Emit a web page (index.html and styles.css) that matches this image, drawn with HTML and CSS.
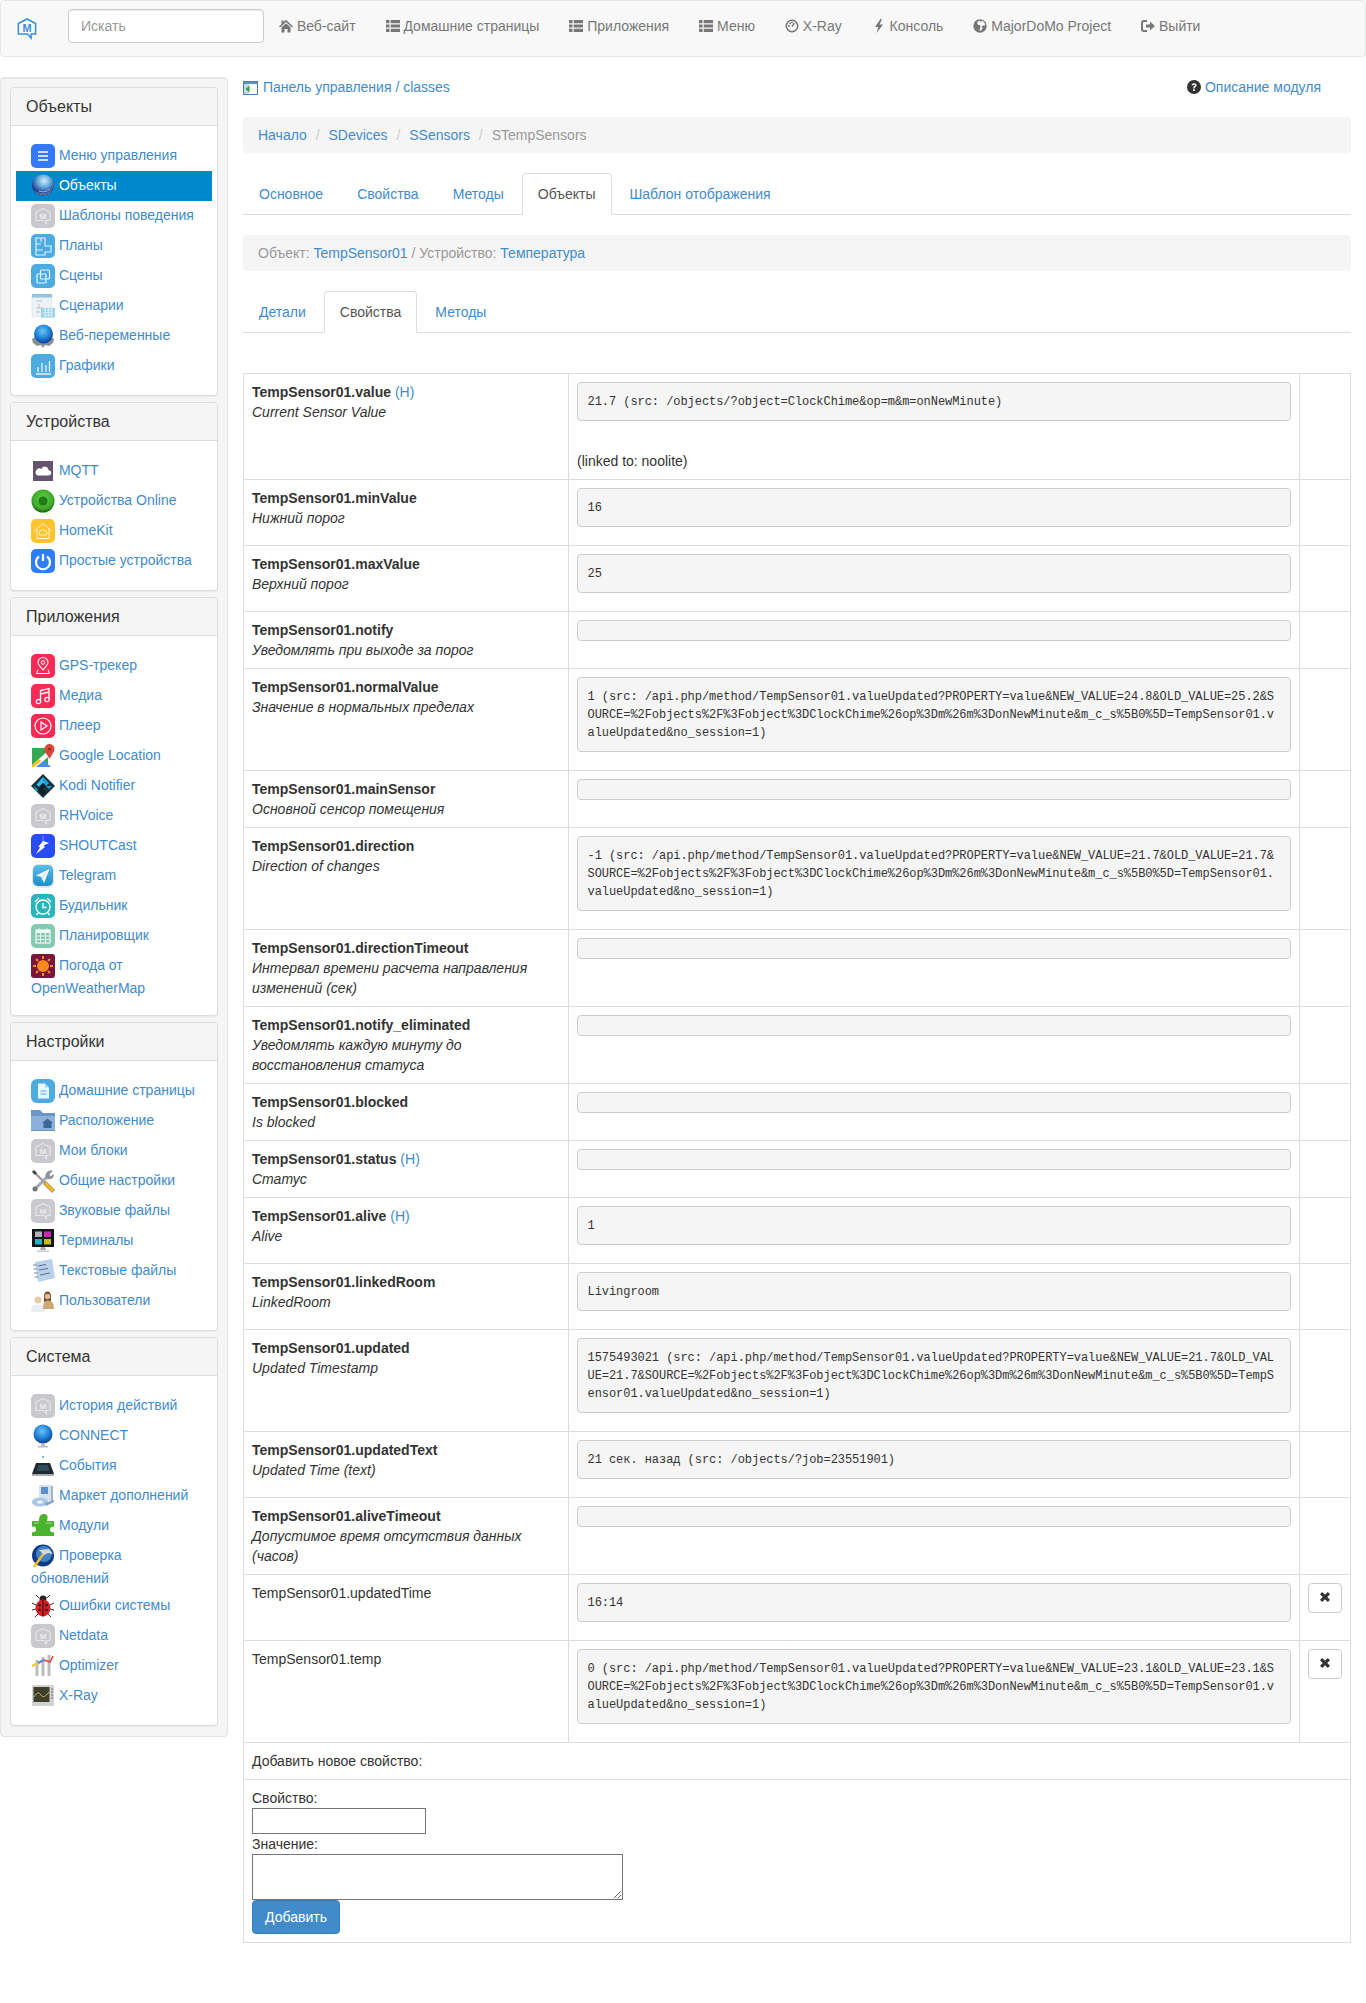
FILE: index.html
```html
<!DOCTYPE html>
<html lang="ru">
<head>
    <meta charset="UTF-8">
    <title>MajorDoMo - classes</title>
    <link rel="stylesheet" href="styles.css">
</head>
<body>

<svg class="sprite" width="0" height="0">
    <defs>
        <radialGradient id="g-ball" cx="55%" cy="30%" r="70%">
            <stop offset="0" stop-color="#cfeaf4"/><stop offset=".4" stop-color="#6aafdb"/><stop offset=".8" stop-color="#27479f"/><stop offset="1" stop-color="#14205f"/>
        </radialGradient>
        <radialGradient id="grad-globe" cx="45%" cy="35%" r="65%">
            <stop offset="0" stop-color="#6cc4f5"/><stop offset=".6" stop-color="#1e7fd6"/><stop offset="1" stop-color="#0d3f98"/>
        </radialGradient>
        <radialGradient id="g-green" cx="50%" cy="40%" r="60%">
            <stop offset="0" stop-color="#5fd03e"/><stop offset=".75" stop-color="#3fa82a"/><stop offset="1" stop-color="#145a12"/>
        </radialGradient>
        <linearGradient id="g-tg" x1="0" y1="0" x2="0" y2="1">
            <stop offset="0" stop-color="#5bbde8"/><stop offset="1" stop-color="#1f8ec9"/>
        </linearGradient>

        <symbol id="i-logo" viewBox="0 0 22 24">
            <path d="M11 1.5 20.5 6.5V18H15.5V22.5L11.5 18H1.5V6.5Z" fill="none" stroke="#3a8fdc" stroke-width="1.7"/>
            <text x="11" y="15.5" text-anchor="middle" class="logo-letter">M</text>
        </symbol>
        <symbol id="i-m" viewBox="0 0 24 24">
            <rect width="24" height="24" rx="5" fill="#c8c8cd"/>
            <path d="M12 4.5 19 8V16.5H15.5V19.5L13 16.5H5V8Z" fill="none" stroke="#e6e6e9" stroke-width="1.2"/>
            <text x="12" y="14.5" text-anchor="middle" class="tile-letter">M</text>
        </symbol>
        <symbol id="i-menu" viewBox="0 0 24 24">
            <rect width="24" height="24" rx="5" fill="#3479fb"/>
            <path d="M7 8H17M7 12H17M7 16H17" stroke="#fff" stroke-width="1.6"/>
        </symbol>
        <symbol id="i-obj" viewBox="0 0 24 24">
            <ellipse cx="12" cy="11" rx="11" ry="10.5" fill="url(#g-ball)"/>
            <path d="M3 15C6 21 18 21 21.5 14 20 23.5 5 23.5 3 15Z" fill="#6a7596"/>
            <path d="M8 17C12 18.5 16 18 19 15" stroke="#aab4d0" fill="none"/>
        </symbol>
        <symbol id="i-plan" viewBox="0 0 24 24">
            <rect width="24" height="24" rx="5" fill="#4cabe0"/>
            <path d="M5 4H14V12H20V18H14V21H5ZM5 10H10M10 4V8M5 16H12" fill="none" stroke="#e6f4fb" stroke-width="1.1"/>
        </symbol>
        <symbol id="i-scene" viewBox="0 0 24 24">
            <rect width="24" height="24" rx="5" fill="#4cabe0"/>
            <rect x="6" y="10" width="9" height="9" rx="1" fill="none" stroke="#e6f4fb" stroke-width="1.2"/>
            <rect x="9.5" y="6" width="9" height="9" rx="1" fill="none" stroke="#e6f4fb" stroke-width="1.2"/>
        </symbol>
        <symbol id="i-script" viewBox="0 0 24 24">
            <rect x="1" y="0" width="20" height="23" fill="#eef2f4" stroke="#dbe2e6" stroke-width=".6"/>
            <rect x="1" y="0" width="20" height="3.5" fill="#8fc6dd"/>
            <path d="M5 7H11M8 10V14M5 14H12M5 18H9" stroke="#b9c4ca"/>
            <rect x="10" y="14" width="14" height="9.5" fill="#9ad4ec"/>
            <path d="M12 16H22M12 18.5H22M12 21H22M14.5 14V23M17.5 14V23M20.5 14V23" stroke="#dff2fa" stroke-width=".8"/>
        </symbol>
        <symbol id="i-webvar" viewBox="0 0 24 24">
            <path d="M1 15 4 13 20 13 23 15 22 19 18 22 14 21 12 24 10 21 6 22 2 19Z" fill="#8b8f94"/>
            <circle cx="12.5" cy="10" r="9.5" fill="url(#grad-globe)"/>
        </symbol>
        <symbol id="i-chart" viewBox="0 0 24 24">
            <rect width="24" height="24" rx="5" fill="#4cabe0"/>
            <path d="M7 18V13M11 18V9M15 18V11M18.5 18V7M5 20H20" stroke="#e6f4fb" stroke-width="1.3"/>
        </symbol>
        <symbol id="i-mqtt" viewBox="0 0 24 24">
            <rect x="2" y="2" width="20" height="20" fill="#655470"/>
            <path d="M6.5 16.5H17.5A2.6 2.6 0 0 0 17.5 11.2 3.6 3.6 0 0 0 10.5 10 3.4 3.4 0 0 0 6.5 16.5Z" fill="#fff"/>
        </symbol>
        <symbol id="i-online" viewBox="0 0 24 24">
            <circle cx="12" cy="12" r="11.5" fill="url(#g-green)"/>
            <circle cx="12" cy="12" r="4.5" fill="#1f7a1a"/>
        </symbol>
        <symbol id="i-homekit" viewBox="0 0 24 24">
            <rect width="24" height="24" rx="5" fill="#fec32d"/>
            <path d="M3.5 12 12 4.5 20.5 12M6 10V19.5H18V10M8.5 12.5 12 10.5 15.5 12.5V16H8.5Z" fill="none" stroke="#fff3c9" stroke-width="1"/>
        </symbol>
        <symbol id="i-power" viewBox="0 0 24 24">
            <rect width="24" height="24" rx="5" fill="#2f7dfb"/>
            <path d="M8 7.5A7 7 0 1 0 16 7.5" fill="none" stroke="#fff" stroke-width="2.2"/>
            <path d="M12 5V12" stroke="#fff" stroke-width="2.2"/>
        </symbol>
        <symbol id="i-gps" viewBox="0 0 24 24">
            <rect width="24" height="24" rx="5" fill="#fb2a55"/>
            <path d="M12 16C9 12.5 7 10.5 7 8.5A5 5 0 0 1 17 8.5C17 10.5 15 12.5 12 16Z" fill="none" stroke="#fff" stroke-width="1.1"/>
            <circle cx="12" cy="8.5" r="1.8" fill="none" stroke="#fff"/>
            <path d="M7 15.5 5.5 19.5H18.5L17 15.5" fill="none" stroke="#fff"/>
        </symbol>
        <symbol id="i-media" viewBox="0 0 24 24">
            <rect width="24" height="24" rx="5" fill="#fb2a55"/>
            <path d="M9.5 17V6.5L18 4.5V15M9.5 10 18 8" fill="none" stroke="#fff" stroke-width="1.3"/>
            <circle cx="7.5" cy="17.5" r="2.2" fill="none" stroke="#fff" stroke-width="1.2"/>
            <circle cx="16" cy="15.5" r="2.2" fill="none" stroke="#fff" stroke-width="1.2"/>
        </symbol>
        <symbol id="i-player" viewBox="0 0 24 24">
            <rect width="24" height="24" rx="5" fill="#fb2a55"/>
            <circle cx="12" cy="12" r="8" fill="none" stroke="#fff" stroke-width="1.2"/>
            <path d="M10 8 16 12 10 16Z" fill="none" stroke="#fff" stroke-width="1.2"/>
        </symbol>
        <symbol id="i-gmap" viewBox="0 0 24 24">
            <path d="M1 4H17V23H1Z" fill="#35a853"/>
            <path d="M1 23 10 14 20 23Z" fill="#4a8bf0"/>
            <path d="M1 21 18 6 22 9 5 23H1Z" fill="#fff"/>
            <path d="M1 21 8 15 10 17 3 23H1Z" fill="#f4c20d"/>
            <path d="M18.5 0A5 5 0 0 1 23.5 5C23.5 8 20.5 11 18.5 15 16.5 11 13.5 8 13.5 5A5 5 0 0 1 18.5 0Z" fill="#d8483a"/>
            <circle cx="18.5" cy="5" r="1.6" fill="#8f2c22"/>
        </symbol>
        <symbol id="i-kodi" viewBox="0 0 24 24">
            <path d="M12 0 24 12 12 24 0 12Z" fill="#16323f"/>
            <path d="M12 3 18 9 15 12 12 9Z" fill="#1aa3d6"/>
            <path d="M12 3V9L8 13 5.5 10.5Z" fill="#33bde8"/>
            <path d="M8 13 12 9 15 12 12 15 15 18 12 21 8 17Z" fill="#0f1d24"/>
            <path d="M15 12 21 12 18 15 15 12ZM3 12 7 16 5.5 17.5 2.5 12.5Z" fill="#1aa3d6"/>
        </symbol>
        <symbol id="i-shout" viewBox="0 0 24 24">
            <rect width="24" height="24" rx="5" fill="#2a4cf7"/>
            <path d="M18 9 12.5 11.5 14 13 5 20 9 13.5 7.5 12.5 12 7Z" fill="#fff"/>
            <path d="M12 7V2" stroke="#7f93fb"/>
        </symbol>
        <symbol id="i-telegram" viewBox="0 0 24 24">
            <rect x="1" y="0" width="22" height="24" rx="6" fill="#dfe9ee"/>
            <rect x="2" y="1" width="20" height="21" rx="5" fill="url(#g-tg)"/>
            <path d="M18.5 5 5 11.5 10.5 13 13 19Z" fill="#fff"/>
            <path d="M10.5 13 18.5 5 12 14 11 17Z" fill="#cfe6f3"/>
        </symbol>
        <symbol id="i-alarm" viewBox="0 0 24 24">
            <rect width="24" height="24" rx="5" fill="#2ab5bd"/>
            <circle cx="12" cy="13" r="7" fill="none" stroke="#fff" stroke-width="1.3"/>
            <path d="M12 9V13.5H15.5M4 8 8 4M20 8 16 4M7 19 5.5 21M17 19 18.5 21" fill="none" stroke="#fff" stroke-width="1.3"/>
        </symbol>
        <symbol id="i-sched" viewBox="0 0 24 24">
            <rect width="24" height="24" rx="5" fill="#85c9b4"/>
            <rect x="5" y="6" width="14" height="13" fill="none" stroke="#eef8f4" stroke-width="1.2"/>
            <rect x="5" y="6" width="14" height="3" fill="#eef8f4"/>
            <path d="M8 4V7M16 4V7M5 12H19M5 15.5H19M9.5 9V19M14.5 9V19" stroke="#eef8f4" stroke-width=".9"/>
        </symbol>
        <symbol id="i-weather" viewBox="0 0 24 24">
            <rect width="24" height="24" rx="3" fill="#79143f"/>
            <circle cx="12" cy="12" r="6" fill="#f68a1f"/>
            <path d="M12 2V5M12 19V22M2 12H5M19 12H22M5 5 7 7M17 17 19 19M19 5 17 7M7 17 5 19" stroke="#f68a1f" stroke-width="2"/>
        </symbol>
        <symbol id="i-doc" viewBox="0 0 24 24">
            <rect width="24" height="24" rx="6" fill="#4cabe0"/>
            <path d="M7 4.5H14L18 8.5V19.5H7Z" fill="#eaf6fc"/>
            <path d="M14 4.5V8.5H18" fill="#a9d8f0"/>
            <path d="M9.5 12H15.5M9.5 15H15.5" stroke="#4cabe0" stroke-width="1.1"/>
        </symbol>
        <symbol id="i-folder" viewBox="0 0 24 24">
            <path d="M0 1H9L12 4H24V22H0Z" fill="#6d94c9"/>
            <path d="M0 7H24V21H0Z" fill="#8cb0dc"/>
            <path d="M11 14 16.5 9.5 22 14H20.5V19H12.5V14Z" fill="#3e6797"/>
        </symbol>
        <symbol id="i-tools" viewBox="0 0 24 24">
            <path d="M2 2 14 14" stroke="#8e9498" stroke-width="2"/>
            <path d="M1 3 3 1 6 4 4 6Z" fill="#444"/>
            <path d="M12.5 15 15 12.5 23.5 21 21 23.5Z" fill="#f5bb17" stroke="#555" stroke-width=".6"/>
            <path d="M4 20 16 8" stroke="#a4a9ad" stroke-width="3"/>
            <path d="M15 9C13 5 17 0 22 2L18.5 5 19.5 7.5 22.5 5C24 9 19 12 15 9Z" fill="#8e9498"/>
            <circle cx="4" cy="20" r="2.5" fill="#6f7478"/>
        </symbol>
        <symbol id="i-terminal" viewBox="0 0 24 24">
            <rect x="1" y="0" width="22" height="18" fill="#14181a"/>
            <rect x="4" y="2.5" width="7" height="5.5" fill="#aeb4b6"/>
            <rect x="13" y="2.5" width="7" height="5.5" fill="#c82ab0"/>
            <rect x="4" y="10" width="7" height="5.5" fill="#1fb6c4"/>
            <rect x="13" y="10" width="7" height="5.5" fill="#c9b81a"/>
            <path d="M10 18H14L15 21H9Z" fill="#a8abae"/>
            <path d="M6 21.5H18V23H6Z" fill="#c9cbcd"/>
        </symbol>
        <symbol id="i-notes" viewBox="0 0 24 24">
            <path d="M4 3 21 0 24 19 7 23Z" fill="#b9d2ec"/>
            <path d="M7 7 15 5.5M8 11 17 9.5M9 16 19 14" stroke="#55677c" stroke-width=".9"/>
            <path d="M2 6H6M2.5 10H6.5M3 14H7M3.5 18H7.5" stroke="#7a8794" stroke-width="1.1"/>
        </symbol>
        <symbol id="i-users" viewBox="0 0 24 24">
            <circle cx="7" cy="11" r="3.5" fill="#e8c9a8"/>
            <path d="M0 23C0 17 3 15.5 7 15.5S14 17 14 23Z" fill="#e9eef2"/>
            <path d="M13 7C13 1 20 1 20 7V13H13Z" fill="#6d4a2c"/>
            <circle cx="16.5" cy="7.5" r="2.8" fill="#e2bb90"/>
            <path d="M12 20C12 13 14 11.5 17 11.5S23 13 23 20Z" fill="#cda874"/>
        </symbol>
        <symbol id="i-connect" viewBox="0 0 24 24">
            <circle cx="12" cy="10" r="9.5" fill="url(#grad-globe)"/>
            <path d="M10 20H14V22H10ZM7 22H17V23.5H7Z" fill="#b8bcc0"/>
        </symbol>
        <symbol id="i-events" viewBox="0 0 24 24">
            <path d="M12 2V4" stroke="#5b9bd5" stroke-width="1.5"/>
            <path d="M5 9H19L23 20H1Z" fill="#1e2a30"/>
            <path d="M7.5 11H16.5L18.5 17H5.5Z" fill="#2f4a58"/>
            <path d="M1 20H23V22H1Z" fill="#a8adb0"/>
        </symbol>
        <symbol id="i-market" viewBox="0 0 24 24">
            <path d="M8 1H20V17H8Z" fill="#d7e2ee"/>
            <path d="M10 3H17V10H10Z" fill="#5d8fc6"/>
            <path d="M20 1 22 3V17H20Z" fill="#9fb3c9"/>
            <ellipse cx="9" cy="18" rx="8" ry="4.5" fill="#a9c7e6"/>
            <ellipse cx="9" cy="18" rx="3" ry="1.6" fill="#eef5fb"/>
            <path d="M14 19 23 16V18L15 22Z" fill="#7fa4cc"/>
        </symbol>
        <symbol id="i-modules" viewBox="0 0 24 24">
            <path d="M1 8H8C8 4 9 1 13 1S17 4 16 8H23V14C20 13 19 15 19 16.5S20 20 23 19V23H1V19C4 20 5 18 5 16S4 13 1 14Z" transform="translate(0 -1)" fill="#4cb32f"/>
            <path d="M3 9H8M15 9H21" stroke="#9fe084" stroke-width="1.2"/>
        </symbol>
        <symbol id="i-update" viewBox="0 0 24 24">
            <circle cx="12" cy="11.5" r="11" fill="#123a86"/>
            <circle cx="13" cy="10" r="8" fill="#3f82c9"/>
            <path d="M3 23 13 9" stroke="#f2c01f" stroke-width="2.4"/>
            <path d="M8 6 18 5 22 10 17 9 13 11Z" fill="#d6d9dc"/>
        </symbol>
        <symbol id="i-bug" viewBox="0 0 24 24">
            <path d="M8 4 5 1M16 4 19 1M5 11 1 9M19 11 23 9M5 15 1 16M19 15 23 16M7 20 4 23M17 20 20 23" stroke="#333" stroke-width="1"/>
            <circle cx="12" cy="5" r="3.5" fill="#222"/>
            <ellipse cx="12" cy="14" rx="7.5" ry="8.5" fill="#d51f26"/>
            <path d="M12 6V22.5" stroke="#30090a"/>
            <circle cx="8.5" cy="11" r="1.3" fill="#222"/><circle cx="15.5" cy="11" r="1.3" fill="#222"/>
            <circle cx="8.5" cy="16" r="1.3" fill="#222"/><circle cx="15.5" cy="16" r="1.3" fill="#222"/>
        </symbol>
        <symbol id="i-optimizer" viewBox="0 0 24 24">
            <path d="M6 6V22M12 3V22M18 1V22" stroke="#b9bdc0" stroke-width="3"/>
            <path d="M1 12 7 9" stroke="#f0c92a" stroke-width="2"/>
            <path d="M7 9 13 6" stroke="#4f86d6" stroke-width="2"/>
            <path d="M13 6 19 8 22 2" fill="none" stroke="#dd4a3a" stroke-width="1.6"/>
        </symbol>
        <symbol id="i-xray" viewBox="0 0 24 24">
            <rect x="1" y="1" width="22" height="21" rx="1.5" fill="#cfd2d0"/>
            <rect x="2.5" y="3" width="16" height="15" fill="#3e3f2c"/>
            <path d="M3 13C6 8 8 8 10 11S14 13 18 8" fill="none" stroke="#c6c25a"/>
            <path d="M20 5H22M20 8H22M20 11H22M20 14H22" stroke="#6a6c6a"/>
        </symbol>

        <symbol id="g-home" viewBox="0 0 14 14">
            <path d="M7 0.8 14 7.4 13 8.5 7 3 1 8.5 0 7.4 2.5 5V1.5H4.5V3.1ZM2.5 8.2 7 4.2 11.5 8.2V13.5H8.5V10H5.5V13.5H2.5Z" fill="#777"/>
        </symbol>
        <symbol id="g-list" viewBox="0 0 14 14">
            <path d="M0 1H3.5V4.2H0ZM4.7 1H14V4.2H4.7ZM0 5.4H3.5V8.6H0ZM4.7 5.4H14V8.6H4.7ZM0 9.8H3.5V13H0ZM4.7 9.8H14V13H4.7Z" fill="#777"/>
        </symbol>
        <symbol id="g-dash" viewBox="0 0 14 14">
            <circle cx="7" cy="7" r="5.7" fill="none" stroke="#777" stroke-width="1.6"/>
            <path d="M7 7.5 9.5 4" stroke="#777" stroke-width="1.3"/>
            <circle cx="4" cy="7" r=".9" fill="#777"/><circle cx="5" cy="4.5" r=".9" fill="#777"/><circle cx="7" cy="3.4" r=".9" fill="#777"/>
        </symbol>
        <symbol id="g-flash" viewBox="0 0 14 14">
            <path d="M8.5 0 3 8H6.2L4.6 14 11 5.4H7.6L10 0Z" fill="#777"/>
        </symbol>
        <symbol id="g-earth" viewBox="0 0 14 14">
            <circle cx="7" cy="7" r="6.7" fill="#777"/>
            <path d="M6.5 1.5C4.5 2.5 3.5 4 5 5.5S7.5 5.5 7.5 7.5 6 10 7 12C9.5 11 10 9 9 8S11.5 6.5 12.3 6C12 4 10.5 2 8.5 1.5L8 3.5Z" fill="#f8f8f8"/>
        </symbol>
        <symbol id="g-logout" viewBox="0 0 14 14">
            <path d="M6 2H3C1.5 2 1 3 1 4V10C1 11 1.5 12 3 12H6" fill="none" stroke="#777" stroke-width="2"/>
            <path d="M5 5.5H9V2.5L14 7 9 11.5V8.5H5Z" fill="#777"/>
        </symbol>
        <symbol id="g-question" viewBox="0 0 14 14">
            <circle cx="7" cy="7" r="7" fill="#333"/>
            <path d="M4.6 5.3C4.8 3.8 5.8 3.2 7.1 3.2 8.6 3.2 9.6 4 9.6 5.2 9.6 6.8 7.7 6.8 7.7 8.4H6.2C6.2 6.2 8 6.2 8 5.3 8 4.8 7.6 4.6 7.1 4.6 6.6 4.6 6.2 4.9 6.1 5.5ZM6.1 9.2H7.8V10.9H6.1Z" fill="#fff"/>
        </symbol>
        <symbol id="g-remove" viewBox="0 0 12 12">
            <path d="M1 3.2 3.2 1 6 3.8 8.8 1 11 3.2 8.2 6 11 8.8 8.8 11 6 8.2 3.2 11 1 8.8 3.8 6Z" fill="#333"/>
        </symbol>
        <symbol id="g-panel" viewBox="0 0 15 15">
            <rect x=".5" y="1.5" width="14" height="13" fill="#fff" stroke="#4d7fa8"/>
            <rect x="1" y="2" width="13" height="2" fill="#5f93bd"/>
            <rect x="1" y="4" width="5" height="10" fill="#c4d9e8"/>
            <path d="M6.5 5.5V12.5L2.5 9Z" fill="#2ea043"/>
        </symbol>
    </defs>
</svg>

<nav class="navbar">
    <a class="brand" href="#"><svg class="brand-logo"><use href="#i-logo"/></svg></a>
    <form class="navbar-form">
        <input class="search" type="text" placeholder="Искать">
    </form>
    <ul class="navbar-nav">
        <li><a href="#"><svg class="glyph"><use href="#g-home"/></svg> Веб-сайт</a></li>
        <li><a href="#"><svg class="glyph"><use href="#g-list"/></svg> Домашние страницы</a></li>
        <li><a href="#"><svg class="glyph"><use href="#g-list"/></svg> Приложения</a></li>
        <li><a href="#"><svg class="glyph"><use href="#g-list"/></svg> Меню</a></li>
        <li><a href="#"><svg class="glyph"><use href="#g-dash"/></svg> X-Ray</a></li>
        <li><a href="#"><svg class="glyph"><use href="#g-flash"/></svg> Консоль</a></li>
        <li><a href="#"><svg class="glyph"><use href="#g-earth"/></svg> MajorDoMo Project</a></li>
        <li><a href="#"><svg class="glyph"><use href="#g-logout"/></svg> Выйти</a></li>
    </ul>
</nav>

<div class="page">
    <aside class="sidebar">
        <section class="panel">
            <h3 class="panel-heading">Объекты</h3>
            <ul class="side-nav">
                <li><a href="#"><svg class="icon"><use href="#i-menu"/></svg> Меню управления</a></li>
                <li class="active"><a href="#"><svg class="icon"><use href="#i-obj"/></svg> Объекты</a></li>
                <li><a href="#"><svg class="icon"><use href="#i-m"/></svg> Шаблоны поведения</a></li>
                <li><a href="#"><svg class="icon"><use href="#i-plan"/></svg> Планы</a></li>
                <li><a href="#"><svg class="icon"><use href="#i-scene"/></svg> Сцены</a></li>
                <li><a href="#"><svg class="icon"><use href="#i-script"/></svg> Сценарии</a></li>
                <li><a href="#"><svg class="icon"><use href="#i-webvar"/></svg> Веб-переменные</a></li>
                <li><a href="#"><svg class="icon"><use href="#i-chart"/></svg> Графики</a></li>
            </ul>
        </section>
        <section class="panel">
            <h3 class="panel-heading">Устройства</h3>
            <ul class="side-nav">
                <li><a href="#"><svg class="icon"><use href="#i-mqtt"/></svg> MQTT</a></li>
                <li><a href="#"><svg class="icon"><use href="#i-online"/></svg> Устройства Online</a></li>
                <li><a href="#"><svg class="icon"><use href="#i-homekit"/></svg> HomeKit</a></li>
                <li><a href="#"><svg class="icon"><use href="#i-power"/></svg> Простые устройства</a></li>
            </ul>
        </section>
        <section class="panel">
            <h3 class="panel-heading">Приложения</h3>
            <ul class="side-nav">
                <li><a href="#"><svg class="icon"><use href="#i-gps"/></svg> GPS-трекер</a></li>
                <li><a href="#"><svg class="icon"><use href="#i-media"/></svg> Медиа</a></li>
                <li><a href="#"><svg class="icon"><use href="#i-player"/></svg> Плеер</a></li>
                <li><a href="#"><svg class="icon"><use href="#i-gmap"/></svg> Google Location</a></li>
                <li><a href="#"><svg class="icon"><use href="#i-kodi"/></svg> Kodi Notifier</a></li>
                <li><a href="#"><svg class="icon"><use href="#i-m"/></svg> RHVoice</a></li>
                <li><a href="#"><svg class="icon"><use href="#i-shout"/></svg> SHOUTCast</a></li>
                <li><a href="#"><svg class="icon"><use href="#i-telegram"/></svg> Telegram</a></li>
                <li><a href="#"><svg class="icon"><use href="#i-alarm"/></svg> Будильник</a></li>
                <li><a href="#"><svg class="icon"><use href="#i-sched"/></svg> Планировщик</a></li>
                <li><a href="#"><svg class="icon"><use href="#i-weather"/></svg> Погода от OpenWeatherMap</a></li>
            </ul>
        </section>
        <section class="panel">
            <h3 class="panel-heading">Настройки</h3>
            <ul class="side-nav">
                <li><a href="#"><svg class="icon"><use href="#i-doc"/></svg> Домашние страницы</a></li>
                <li><a href="#"><svg class="icon"><use href="#i-folder"/></svg> Расположение</a></li>
                <li><a href="#"><svg class="icon"><use href="#i-m"/></svg> Мои блоки</a></li>
                <li><a href="#"><svg class="icon"><use href="#i-tools"/></svg> Общие настройки</a></li>
                <li><a href="#"><svg class="icon"><use href="#i-m"/></svg> Звуковые файлы</a></li>
                <li><a href="#"><svg class="icon"><use href="#i-terminal"/></svg> Терминалы</a></li>
                <li><a href="#"><svg class="icon"><use href="#i-notes"/></svg> Текстовые файлы</a></li>
                <li><a href="#"><svg class="icon"><use href="#i-users"/></svg> Пользователи</a></li>
            </ul>
        </section>
        <section class="panel">
            <h3 class="panel-heading">Система</h3>
            <ul class="side-nav">
                <li><a href="#"><svg class="icon"><use href="#i-m"/></svg> История действий</a></li>
                <li><a href="#"><svg class="icon"><use href="#i-connect"/></svg> CONNECT</a></li>
                <li><a href="#"><svg class="icon"><use href="#i-events"/></svg> События</a></li>
                <li><a href="#"><svg class="icon"><use href="#i-market"/></svg> Маркет дополнений</a></li>
                <li><a href="#"><svg class="icon"><use href="#i-modules"/></svg> Модули</a></li>
                <li><a href="#"><svg class="icon"><use href="#i-update"/></svg> Проверка обновлений</a></li>
                <li><a href="#"><svg class="icon"><use href="#i-bug"/></svg> Ошибки системы</a></li>
                <li><a href="#"><svg class="icon"><use href="#i-m"/></svg> Netdata</a></li>
                <li><a href="#"><svg class="icon"><use href="#i-optimizer"/></svg> Optimizer</a></li>
                <li><a href="#"><svg class="icon"><use href="#i-xray"/></svg> X-Ray</a></li>
            </ul>
        </section>
    </aside>

    <main class="content">
        <div class="title-row">
            <a href="#"><svg class="panel-icon"><use href="#g-panel"/></svg> Панель управления / classes</a>
            <a class="help-link" href="#"><svg class="glyph"><use href="#g-question"/></svg> Описание модуля</a>
        </div>

        <ol class="breadcrumb">
            <li><a href="#">Начало</a></li>
            <li><a href="#">SDevices</a></li>
            <li><a href="#">SSensors</a></li>
            <li>STempSensors</li>
        </ol>

        <ul class="tabs">
            <li><a href="#">Основное</a></li>
            <li><a href="#">Свойства</a></li>
            <li><a href="#">Методы</a></li>
            <li class="active"><a href="#">Объекты</a></li>
            <li><a href="#">Шаблон отображения</a></li>
        </ul>

        <div class="info-bar">Объект: <a href="#">TempSensor01</a> / Устройство: <a href="#">Температура</a></div>

        <ul class="tabs">
            <li><a href="#">Детали</a></li>
            <li class="active"><a href="#">Свойства</a></li>
            <li><a href="#">Методы</a></li>
        </ul>

        <table class="props">
            <colgroup><col class="col-name"><col class="col-value"><col class="col-action"></colgroup>
            <tr>
                <td><b>TempSensor01.value</b> <a href="#">(H)</a><br><i>Current Sensor Value</i></td>
                <td><pre>21.7 (src: /objects/?object=ClockChime&amp;op=m&amp;m=onNewMinute)</pre><br>(linked to: noolite)</td>
                <td></td>
            </tr>
            <tr>
                <td><b>TempSensor01.minValue</b><br><i>Нижний порог</i></td>
                <td><pre>16</pre></td>
                <td></td>
            </tr>
            <tr>
                <td><b>TempSensor01.maxValue</b><br><i>Верхний порог</i></td>
                <td><pre>25</pre></td>
                <td></td>
            </tr>
            <tr>
                <td><b>TempSensor01.notify</b><br><i>Уведомлять при выходе за порог</i></td>
                <td><pre></pre></td>
                <td></td>
            </tr>
            <tr>
                <td><b>TempSensor01.normalValue</b><br><i>Значение в нормальных пределах</i></td>
                <td><pre>1 (src: /api.php/method/TempSensor01.valueUpdated?PROPERTY=value&amp;NEW_VALUE=24.8&amp;OLD_VALUE=25.2&amp;SOURCE=%2Fobjects%2F%3Fobject%3DClockChime%26op%3Dm%26m%3DonNewMinute&amp;m_c_s%5B0%5D=TempSensor01.valueUpdated&amp;no_session=1)</pre></td>
                <td></td>
            </tr>
            <tr>
                <td><b>TempSensor01.mainSensor</b><br><i>Основной сенсор помещения</i></td>
                <td><pre></pre></td>
                <td></td>
            </tr>
            <tr>
                <td><b>TempSensor01.direction</b><br><i>Direction of changes</i></td>
                <td><pre>-1 (src: /api.php/method/TempSensor01.valueUpdated?PROPERTY=value&amp;NEW_VALUE=21.7&amp;OLD_VALUE=21.7&amp;SOURCE=%2Fobjects%2F%3Fobject%3DClockChime%26op%3Dm%26m%3DonNewMinute&amp;m_c_s%5B0%5D=TempSensor01.valueUpdated&amp;no_session=1)</pre></td>
                <td></td>
            </tr>
            <tr>
                <td><b>TempSensor01.directionTimeout</b><br><i>Интервал времени расчета направления изменений (сек)</i></td>
                <td><pre></pre></td>
                <td></td>
            </tr>
            <tr>
                <td><b>TempSensor01.notify_eliminated</b><br><i>Уведомлять каждую минуту до восстановления статуса</i></td>
                <td><pre></pre></td>
                <td></td>
            </tr>
            <tr>
                <td><b>TempSensor01.blocked</b><br><i>Is blocked</i></td>
                <td><pre></pre></td>
                <td></td>
            </tr>
            <tr>
                <td><b>TempSensor01.status</b> <a href="#">(H)</a><br><i>Статус</i></td>
                <td><pre></pre></td>
                <td></td>
            </tr>
            <tr>
                <td><b>TempSensor01.alive</b> <a href="#">(H)</a><br><i>Alive</i></td>
                <td><pre>1</pre></td>
                <td></td>
            </tr>
            <tr>
                <td><b>TempSensor01.linkedRoom</b><br><i>LinkedRoom</i></td>
                <td><pre>Livingroom</pre></td>
                <td></td>
            </tr>
            <tr>
                <td><b>TempSensor01.updated</b><br><i>Updated Timestamp</i></td>
                <td><pre>1575493021 (src: /api.php/method/TempSensor01.valueUpdated?PROPERTY=value&amp;NEW_VALUE=21.7&amp;OLD_VALUE=21.7&amp;SOURCE=%2Fobjects%2F%3Fobject%3DClockChime%26op%3Dm%26m%3DonNewMinute&amp;m_c_s%5B0%5D=TempSensor01.valueUpdated&amp;no_session=1)</pre></td>
                <td></td>
            </tr>
            <tr>
                <td><b>TempSensor01.updatedText</b><br><i>Updated Time (text)</i></td>
                <td><pre>21 сек. назад (src: /objects/?job=23551901)</pre></td>
                <td></td>
            </tr>
            <tr>
                <td><b>TempSensor01.aliveTimeout</b><br><i>Допустимое время отсутствия данных (часов)</i></td>
                <td><pre></pre></td>
                <td></td>
            </tr>
            <tr>
                <td>TempSensor01.updatedTime</td>
                <td><pre>16:14</pre></td>
                <td><a class="btn-remove" href="#"><svg class="remove-glyph"><use href="#g-remove"/></svg></a></td>
            </tr>
            <tr>
                <td>TempSensor01.temp</td>
                <td><pre>0 (src: /api.php/method/TempSensor01.valueUpdated?PROPERTY=value&amp;NEW_VALUE=23.1&amp;OLD_VALUE=23.1&amp;SOURCE=%2Fobjects%2F%3Fobject%3DClockChime%26op%3Dm%26m%3DonNewMinute&amp;m_c_s%5B0%5D=TempSensor01.valueUpdated&amp;no_session=1)</pre></td>
                <td><a class="btn-remove" href="#"><svg class="remove-glyph"><use href="#g-remove"/></svg></a></td>
            </tr>
            <tr>
                <td colspan="3">Добавить новое свойство:</td>
            </tr>
            <tr>
                <td colspan="3">
                    <form class="add-form">
                        <label for="newName">Свойство:</label>
                        <input id="newName" type="text">
                        <label for="newValue">Значение:</label>
                        <textarea id="newValue"></textarea>
                        <button class="btn-primary" type="button">Добавить</button>
                    </form>
                </td>
            </tr>
        </table>
    </main>
</div>

</body>
</html>
```

FILE: styles.css
```css
* {
    box-sizing: border-box;
}

body {
    margin: 0;
    font-family: "Liberation Sans", Arial, sans-serif;
    font-size: 14px;
    line-height: 20px;
    color: #333;
    background-color: #fff;
}

a {
    color: #428bca;
    text-decoration: none;
}

ul,
ol {
    margin: 0;
    padding: 0;
    list-style: none;
}

.sprite {
    display: block;
    width: 0;
    height: 0;
}

.logo-letter {
    font-family: "Liberation Sans", Arial, sans-serif;
    font-size: 12px;
    font-weight: bold;
    fill: #3a8fdc;
}

.tile-letter {
    font-family: "Liberation Sans", Arial, sans-serif;
    font-size: 8px;
    font-weight: bold;
    fill: #eeeef0;
}

/* top bar */
.navbar {
    display: flex;
    align-items: flex-start;
    height: 57px;
    margin-bottom: 20px;
    background-color: #f8f8f8;
    border: 1px solid #e7e7e7;
    border-radius: 4px;
}

.brand {
    display: block;
    margin: 16px 0 0 16px;
}

.brand-logo {
    display: block;
    width: 20px;
    height: 23px;
}

.navbar-form {
    margin: 8px 0 0 31px;
}

.search {
    display: block;
    width: 196px;
    height: 34px;
    padding: 6px 12px;
    font: inherit;
    color: #555;
    background-color: #fff;
    border: 1px solid #ccc;
    border-radius: 4px;
    box-shadow: inset 0 1px 1px rgba(0, 0, 0, 0.075);
}

.search::placeholder {
    color: #999;
    opacity: 1;
}

.navbar-nav {
    display: flex;
}

.navbar-nav a {
    display: block;
    padding: 15px;
    color: #777;
}

.glyph {
    display: inline-block;
    width: 14px;
    height: 14px;
    vertical-align: -2px;
}

/* layout */
.page {
    display: flex;
    gap: 15px;
    align-items: flex-start;
    padding-right: 15px;
}

.sidebar {
    flex: 0 0 228px;
    padding: 9px 9px 10px;
    background-color: #f5f5f5;
    border: 1px solid #e3e3e3;
    border-radius: 4px;
    box-shadow: inset 0 1px 1px rgba(0, 0, 0, 0.05);
}

.content {
    flex: 1;
    min-width: 0;
}

/* sidebar panels */
.panel {
    margin-bottom: 6px;
    background-color: #fff;
    border: 1px solid #ddd;
    border-radius: 4px;
    box-shadow: 0 1px 1px rgba(0, 0, 0, 0.05);
}

.panel:last-child {
    margin-bottom: 0;
}

.panel-heading {
    margin: 0;
    padding: 10px 15px;
    font-size: 16px;
    font-weight: normal;
    line-height: 17px;
    background-color: #f5f5f5;
    border-bottom: 1px solid #ddd;
    border-radius: 3px 3px 0 0;
}

.side-nav {
    padding: 15px 5px 14px;
}

.side-nav a {
    display: block;
    padding: 3px 15px;
}

.side-nav .active a {
    color: #fff;
    background-color: #0088cc;
}

.icon {
    display: inline-block;
    width: 24px;
    height: 24px;
    vertical-align: middle;
}

/* page head */
.title-row {
    display: flex;
    justify-content: space-between;
    margin-bottom: 20px;
}

.panel-icon {
    display: inline-block;
    width: 15px;
    height: 15px;
    margin-right: 1px;
    vertical-align: -3px;
}

.help-link {
    margin-right: 30px;
}

.breadcrumb {
    margin-bottom: 20px;
    padding: 8px 15px;
    color: #999;
    background-color: #f5f5f5;
    border-radius: 4px;
}

.breadcrumb li {
    display: inline-block;
}

.breadcrumb li + li::before {
    content: "/\00a0";
    padding: 0 5px;
    color: #ccc;
}

.tabs {
    display: flex;
    height: 42px;
    margin-bottom: 20px;
    border-bottom: 1px solid #ddd;
}

.tabs li {
    height: 42px;
    margin-right: 2px;
}

.tabs a {
    display: block;
    padding: 10px 15px;
    border: 1px solid transparent;
    border-radius: 4px 4px 0 0;
}

.tabs .active a {
    color: #555;
    background-color: #fff;
    border-color: #ddd #ddd #fff;
}

.info-bar {
    margin-bottom: 20px;
    padding: 8px 15px;
    color: #999;
    background-color: #f5f5f5;
    border-radius: 4px;
}

.tabs + .props {
    margin-top: 40px;
}

/* properties table */
.props {
    width: 100%;
    table-layout: fixed;
    border-collapse: collapse;
    border: 1px solid #ddd;
}

.col-name {
    width: 325px;
}

.col-action {
    width: 51px;
}

.props td {
    padding: 8px;
    vertical-align: top;
    border: 1px solid #ddd;
}

.props pre {
    margin: 0 0 10px;
    padding: 10px 9.5px 9px;
    font-family: "Liberation Mono", "Courier New", monospace;
    font-size: 12px;
    line-height: 18px;
    letter-spacing: -0.05px;
    color: #333;
    white-space: pre-wrap;
    word-break: break-all;
    background-color: #f5f5f5;
    border: 1px solid #ccc;
    border-radius: 4px;
}

.btn-remove {
    display: flex;
    align-items: center;
    justify-content: center;
    width: 34px;
    height: 30px;
    padding-bottom: 2px;
    background-color: #fff;
    border: 1px solid #ccc;
    border-radius: 4px;
}

.remove-glyph {
    width: 12px;
    height: 12px;
}

/* add form */
.add-form label {
    display: block;
}

.add-form input,
.add-form textarea {
    display: block;
    margin: 0;
    font: inherit;
    background-color: #fff;
    border: 1px solid #767676;
}

.add-form input {
    width: 174px;
    height: 26px;
}

.add-form textarea {
    width: 371px;
    height: 46px;
}

.btn-primary {
    display: block;
    width: 88px;
    height: 34px;
    padding: 6px 12px;
    font: inherit;
    color: #fff;
    background-color: #428bca;
    border: 1px solid #357ebd;
    border-radius: 4px;
}
```
